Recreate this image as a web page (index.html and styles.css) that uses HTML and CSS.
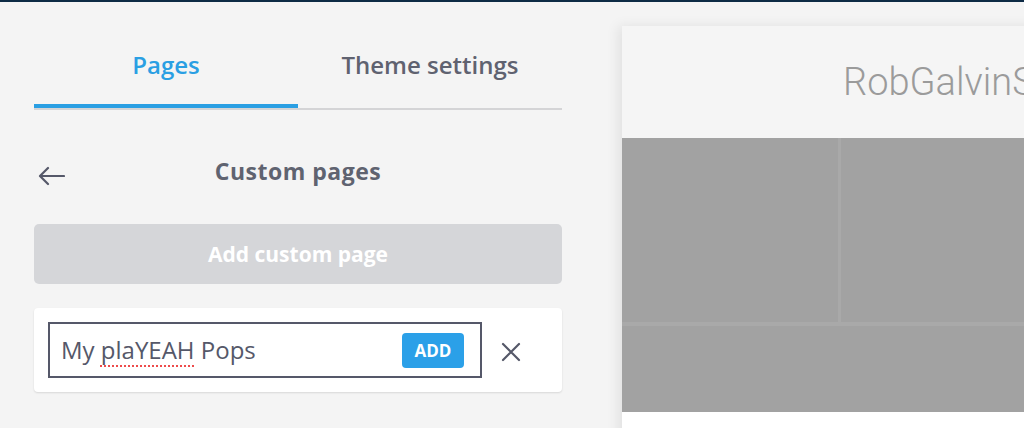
FILE: index.html
```html
<!DOCTYPE html>
<html lang="en">
<head>
<meta charset="utf-8">
<title>Custom pages</title>
<link rel="stylesheet" href="styles.css">
</head>
<body>
<div class="topbar"></div>
<div class="main">
  <aside class="panel">
    <nav class="tabs">
      <div class="tab active">Pages</div>
      <div class="tab">Theme settings</div>
    </nav>
    <div class="subhead">
      <span class="back">
        <svg width="27" height="20" viewBox="0 0 27 20" aria-hidden="true">
          <path d="M26 10H2.5M10 2L2 10l8 8" fill="none" stroke="#555869" stroke-width="2.2" stroke-linecap="round" stroke-linejoin="round"/>
        </svg>
      </span>
      <h2 class="title">Custom pages</h2>
      <span></span>
    </div>
    <button class="add-page" type="button">Add custom page</button>
    <div class="card">
      <div class="field">
        <div class="field-text">My <span class="misspelled">plaYEAH</span> Pops</div>
        <button class="add-btn" type="button">ADD</button>
      </div>
      <span class="close">
        <svg width="20" height="20" viewBox="0 0 20 20" aria-hidden="true">
          <path d="M2 2L18 18M18 2L2 18" fill="none" stroke="#555869" stroke-width="2.2" stroke-linecap="round"/>
        </svg>
      </span>
    </div>
  </aside>
  <section class="preview">
    <header class="preview-head">RobGalvinStudio</header>
    <div class="grid">
      <div class="cell"></div>
      <div class="cell"></div>
      <div class="cell wide"></div>
    </div>
    <div class="preview-foot"></div>
  </section>
</div>
</body>
</html>
```

FILE: styles.css
```css
* { box-sizing: border-box; }

html, body {
  margin: 0;
  padding: 0;
  width: 1024px;
  height: 428px;
  overflow: hidden;
  background: #f4f4f4;
  font-family: "Open Sans", "Noto Sans", sans-serif;
}

.topbar {
  height: 2px;
  background: #0d2b45;
}

.main {
  display: flex;
  align-items: flex-start;
}

.panel {
  flex: 0 0 562px;
  padding-left: 34px;
}

.tabs {
  display: flex;
  border-bottom: 2px solid #d4d4d6;
}

.tab {
  flex: 1 1 0;
  text-align: center;
  font-size: 24px;
  font-weight: 600;
  line-height: 32px;
  color: #5f6270;
  padding: 47px 0 23px;
  border-bottom: 4px solid transparent;
}

.tab.active {
  color: #2a9fe3;
  border-bottom-color: #2a9fe3;
}

.subhead {
  display: grid;
  grid-template-columns: 1fr auto 1fr;
  align-items: center;
  margin-top: 46px;
  height: 30px;
}

.back {
  display: flex;
  padding-left: 4px;
  padding-top: 10px;
}

.title {
  margin: 0;
  font-size: 23px;
  font-weight: 700;
  line-height: 30px;
  color: #5f6370;
  letter-spacing: 0.5px;
}

.add-page {
  display: block;
  width: 100%;
  height: 60px;
  margin-top: 38px;
  border: 0;
  border-radius: 5px;
  background: #d5d6d9;
  color: #fff;
  font-family: inherit;
  font-size: 21px;
  font-weight: 700;
}

.card {
  display: flex;
  align-items: center;
  margin-top: 24px;
  padding: 14px 14px;
  background: #fff;
  border-radius: 4px;
  box-shadow: 0 1px 2px rgba(0, 0, 0, 0.12);
}

.field {
  display: flex;
  align-items: center;
  width: 434px;
  height: 56px;
  border: 2px solid #555869;
  padding: 0 16px 0 11px;
}

.field-text {
  flex: 1;
  font-size: 24px;
  line-height: 52px;
  color: #555869;
  white-space: nowrap;
}

.misspelled {
  text-decoration: underline dotted #ee4b4b;
  text-decoration-thickness: 2px;
  text-underline-offset: 6px;
}

.add-btn {
  width: 62px;
  height: 35px;
  border: 0;
  border-radius: 4px;
  background: #2ba0e8;
  color: #fff;
  font-family: inherit;
  font-size: 17px;
  font-weight: 700;
  padding: 0;
  margin-top: 1px;
}

.close {
  display: flex;
  margin-left: 19px;
  margin-top: 4px;
}

.preview {
  flex: 0 0 520px;
  margin-left: 60px;
  margin-top: 24px;
  box-shadow: -4px 0 12px rgba(0, 0, 0, 0.08);
  background: #fff;
}

.preview-head {
  height: 112px;
  background: #f5f5f5;
  padding: 34px 0 0 221px;
  font-family: Roboto, "Liberation Sans", sans-serif;
  font-weight: 300;
  font-size: 38px;
  line-height: 44px;
  color: #9b9b9b;
  white-space: nowrap;
}

.grid {
  display: grid;
  grid-template-columns: 216px 1fr;
  grid-template-rows: 184px 86px;
  gap: 4px 3px;
  background: #a9a9a9;
}

.cell {
  background: #a2a2a2;
}

.cell.wide {
  grid-column: 1 / 3;
}

.preview-foot {
  height: 40px;
  background: #fff;
}
```
